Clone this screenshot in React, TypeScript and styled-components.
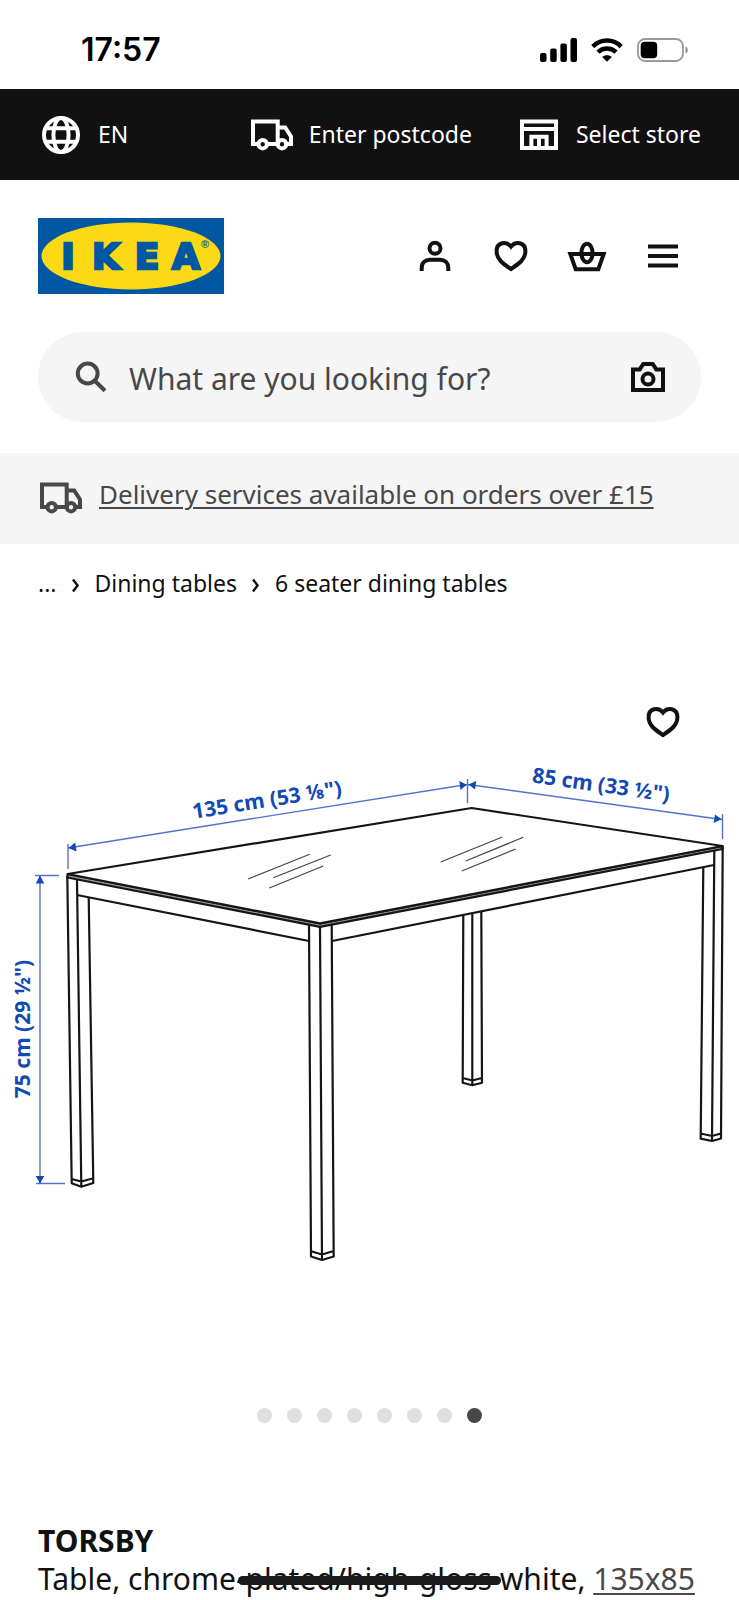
import React from "react";
import styled, { createGlobalStyle } from "styled-components";

const GlobalStyle = createGlobalStyle`
  *, *::before, *::after { box-sizing: border-box; }
  body {
    margin: 0;
    background: #fff;
    color: #111;
    font-family: "Noto Sans", "Open Sans", sans-serif;
  }
  button { padding: 0; border: 0; background: none; color: inherit; font: inherit; cursor: pointer; }
  a { color: inherit; }
  svg { display: block; flex: none; }
`;

const GUTTER = "38px";

const StatusBar = styled.div`
  display: flex;
  align-items: center;
  justify-content: space-between;
  height: 89px;
  padding: 10px 50px 0 81px;
  color: #000;
`;

const Clock = styled.time`
  font: 600 32px/40px Inter, "Liberation Sans", sans-serif;
`;

const StatusIcons = styled.div`
  display: flex;
  align-items: center;
  gap: 14px;
`;

const UtilityBar = styled.nav`
  display: flex;
  align-items: center;
  gap: 44px;
  height: 91px;
  padding: 0 ${GUTTER};
  background: #111;
  color: #fff;
`;

const UtilityButton = styled.button<{ $grow?: boolean }>`
  display: flex;
  align-items: center;
  gap: 14px;
  margin-right: ${(p) => (p.$grow ? "auto" : "0")};
  font-size: 23px;
  line-height: 32px;
  white-space: nowrap;
`;

const UtilityLabel = styled.span`
  padding-bottom: 2px;
`;

const Header = styled.header`
  display: flex;
  flex-direction: column;
  gap: 38px;
  padding: 38px ${GUTTER} 31px;
`;

const HeaderRow = styled.div`
  display: flex;
  align-items: center;
  justify-content: space-between;
`;

const Actions = styled.div`
  display: flex;
`;

const IconButton = styled.button`
  display: grid;
  place-items: center;
  width: 76px;
  height: 76px;
  flex: none;
`;

const SearchBox = styled.form`
  display: flex;
  align-items: center;
  height: 90px;
  padding: 0 15px 0 30px;
  border-radius: 45px;
  background: #f5f5f5;
  color: #484848;
`;

const SearchInput = styled.input`
  flex: 1;
  min-width: 0;
  margin-left: 15px;
  padding: 3px 0 0;
  border: 0;
  outline: 0;
  background: none;
  color: #111;
  font: 400 30px/40px "Noto Sans", "Open Sans", sans-serif;
  &::placeholder { color: #484848; opacity: 1; }
`;

const CameraButton = styled(IconButton)`
  color: #111;
`;

const DeliveryBanner = styled.aside`
  display: flex;
  align-items: flex-start;
  gap: 15px;
  padding: 22px ${GUTTER} 23px;
  background: #f5f5f5;
  color: #484848;
`;

const DeliveryLink = styled.a`
  font-size: 26px;
  line-height: 38px;
  text-decoration-thickness: 2px;
  text-underline-offset: 3px;
`;

const Crumbs = styled.ol`
  display: flex;
  align-items: center;
  gap: 14px;
  margin: 0;
  padding: 22px ${GUTTER};
  list-style: none;
  font-size: 23px;
  line-height: 34px;
`;

const Crumb = styled.li`
  display: flex;
  align-items: center;
  gap: 14px;
  a { text-decoration: none; }
`;

const Gallery = styled.section`
  position: relative;
  padding-top: 18px;
`;

const SaveButton = styled(IconButton)`
  position: absolute;
  top: 62px;
  right: ${GUTTER};
`;

const Drawing = styled.svg`
  width: 100%;
  height: auto;
`;

const Dots = styled.div`
  display: flex;
  justify-content: center;
  gap: 15px;
  padding: 28px 0 99px;
`;

const Dot = styled.button<{ $active: boolean }>`
  width: 15px;
  height: 15px;
  border-radius: 50%;
  background: ${(p) => (p.$active ? "#484848" : "#dfdfdf")};
`;

const Product = styled.section`
  padding: 0 ${GUTTER} 2px;
  font-size: 30px;
  line-height: 38px;
`;

const ProductName = styled.h1`
  margin: 0;
  font-size: 30px;
  line-height: 38px;
  font-weight: 700;
`;

const Description = styled.p`
  margin: 0;
  white-space: nowrap;
`;

const Redacted = styled.span`
  position: relative;
  &::after {
    content: "";
    position: absolute;
    left: 2px;
    right: -9px;
    top: 18px;
    height: 9px;
    border-radius: 5px;
    background: #1b1b1b;
  }
`;

const SizeLink = styled.a`
  color: #484848;
  text-decoration-thickness: 2px;
  text-underline-offset: 3px;
`;

type IconProps = { children: React.ReactNode };

const Icon = ({ children }: IconProps) => (
  <svg width="46" height="46" viewBox="0 0 46 46" fill="none" stroke="currentColor" strokeWidth="4" aria-hidden="true">
    {children}
  </svg>
);

const GlobeIcon = () => (
  <Icon>
    <circle cx="23" cy="23" r="17" />
    <ellipse cx="23" cy="23" rx="7.6" ry="17" />
    <path d="M7 16.3H39M7 29.7H39" />
  </Icon>
);

const TruckIcon = () => (
  <Icon>
    <path d="M9.5 32H4V9.4H28.7V32M18 32H29M28.7 15.4H36.2L42 24.5V32H37.5" />
    <circle cx="13.7" cy="32.2" r="4.2" />
    <circle cx="33" cy="32.2" r="4.2" />
  </Icon>
);

const StoreIcon = () => (
  <Icon>
    <path d="M6 9.4H40V36H6ZM6 17H40M15.4 36V24.7H30.6V36M23 25V36" />
  </Icon>
);

const PersonIcon = () => (
  <Icon>
    <circle cx="23" cy="15.3" r="5.5" />
    <path d="M9.7 38V35C9.7 30 13 26.8 18 26.8H28C33 26.8 36.3 30 36.3 35V38" />
  </Icon>
);

const HeartIcon = () => (
  <Icon>
    <path d="M23 13.5C18.5 7.8 8.6 9 8.6 18.3C8.6 26.5 15.5 31 23 36C30.5 31 37.4 26.5 37.4 18.3C37.4 9 27.5 7.8 23 13.5Z" />
  </Icon>
);

const BasketIcon = () => (
  <Icon>
    <path d="M6.3 21H39.7L34.3 36.2H11.7Z" />
    <ellipse cx="23" cy="20" rx="5.6" ry="9.2" />
  </Icon>
);

const MenuIcon = () => (
  <Icon>
    <path d="M8 13.5H38M8 23H38M8 32.5H38" />
  </Icon>
);

const SearchIcon = () => (
  <Icon>
    <circle cx="19.7" cy="19.5" r="9.9" />
    <path d="M26.5 26.5L37 36.7" />
  </Icon>
);

const CameraIcon = () => (
  <Icon>
    <path d="M8 15.4H14.7L18.3 9.9H27.7L31.3 15.4H38V36H8Z" />
    <circle cx="23" cy="25" r="5.5" />
  </Icon>
);

const ChevronIcon = () => (
  <svg width="10" height="20" viewBox="0 0 10 20" fill="none" stroke="currentColor" strokeWidth="2.4" aria-hidden="true">
    <path d="M2 6.4L6.6 12.4L2 18.4" />
  </svg>
);

const SignalIcon = () => (
  <svg width="37" height="24" viewBox="0 0 37 24" aria-hidden="true">
    <rect x="0" y="15" width="6.5" height="9" rx="2" />
    <rect x="10.2" y="10.5" width="6.5" height="13.5" rx="2" />
    <rect x="20.4" y="5.5" width="6.5" height="18.5" rx="2" />
    <rect x="30.5" y="0" width="6.5" height="24" rx="2" />
  </svg>
);

const WifiIcon = () => (
  <svg width="32" height="24" viewBox="0 0 32 24" fill="none" stroke="#000" strokeWidth="4.5" aria-hidden="true">
    <path d="M1.8 8.6C9.6 .6 22.4 .6 30.2 8.6" />
    <path d="M7 14.2C12 9.3 20 9.3 25 14.2" />
    <path d="M11.2 19C13.8 16.7 18.2 16.7 20.8 19L16 23.8Z" fill="#000" stroke="none" />
  </svg>
);

const BatteryIcon = () => (
  <svg width="52" height="24" viewBox="0 0 52 24" aria-hidden="true">
    <rect x="1" y="1" width="45" height="22" rx="7" fill="none" stroke="#999" strokeWidth="1.8" />
    <rect x="3.7" y="3.7" width="16.5" height="16.6" rx="4" />
    <path d="M48.5 8.5C51.5 9.5 51.5 14.5 48.5 15.5Z" fill="#8c8c8c" />
  </svg>
);

const Logo = () => (
  <svg width="186" height="76" viewBox="0 0 186 76" role="img" aria-label="IKEA">
    <rect width="186" height="76" fill="#0058a3" />
    <ellipse cx="93" cy="38" rx="89.5" ry="33.5" fill="#fbd914" />
    <text
      x="30 68 109 148"
      y="51"
      textAnchor="middle"
      fill="#0058a3"
      stroke="#0058a3"
      strokeWidth="2.6"
      fontFamily="DejaVu Sans, sans-serif"
      fontWeight="700"
      fontSize="36"
    >
      IKEA
    </text>
    <text x="163" y="30" fill="#0058a3" fontFamily="Liberation Sans, sans-serif" fontWeight="700" fontSize="11">®</text>
  </svg>
);

const TableDrawing = () => (
  <Drawing viewBox="0 640 739 740" role="img" aria-label="TORSBY table measurements">
    <g fill="none" stroke="#151515" strokeWidth="2.2" strokeLinejoin="round">
      <path d="M67.7 874L320 923.3L722.5 846V849L320 926.8L67.3 877.5Z" fill="#999" />
      <path d="M67.7 874L471.7 808L722.5 846L320 923.3Z" fill="#fff" />
      <path d="M77 895L309 941M332 941L714 865" />
      <path d="M67.3 876L71.7 1183.3L81.3 1186.7L93.3 1183L88.7 897M77 880L81.3 1186M71.7 1179L81.3 1181.5L93.3 1178.3" />
      <path d="M309 925L311 1256.5L322 1260L333.7 1256.5L331.7 925M320 926L322 1260M311 1251.3L322 1254.5L333.7 1251" />
      <path d="M463.3 915L462.7 1082.7L472.3 1085.3L482 1082.7L481.3 911M472.3 913V1085M462.7 1078L472.3 1080.5L482 1078" />
      <path d="M703.3 867L700.7 1138.7L712 1141L721 1138.5L722.7 847M714.3 851L712 1141M700.7 1133.5L712 1136L721 1133.5" />
    </g>
    <path
      d="M248 879L309.7 854.3M273.3 877.7L330.7 855M269.3 888L323.3 866M440.7 862L502.3 837M465.7 861L523.3 837.3M461.7 871L515.7 849"
      fill="none"
      stroke="#444"
      strokeWidth="1.2"
    />
    <path
      d="M68 844V869M467.5 779V803M722.5 814V839M68 848L467 784.5M468 784.5L722 819.5M35 875.5H59M36 1183.5H65M40 876V1183"
      fill="none"
      stroke="#5570cf"
      strokeWidth="1.4"
    />
    <g fill="#1149b5">
      <path d="M68.5 848L75.3 842.5L76.5 851.5Z" />
      <path d="M466.7 784.7L459.3 781L460.5 790Z" />
      <path d="M468.5 784.5L476.3 781L475 789.5Z" />
      <path d="M721.5 819.3L715 814.5L713.7 823Z" />
      <path d="M40 875.5L35.7 883.5H44.3Z" />
      <path d="M40 1183.5L35.7 1176H44.3Z" />
    </g>
    <g
      fill="#1149b5"
      fontFamily="Noto Sans, Open Sans, sans-serif"
      fontWeight="700"
      fontSize="21"
      textAnchor="middle"
    >
      <text transform="translate(268 807) rotate(-9)">135 cm (53 ⅛")</text>
      <text transform="translate(600 792) rotate(8)">85 cm (33 ½")</text>
      <text transform="translate(30 1029) rotate(-90)">75 cm (29 ½")</text>
    </g>
  </Drawing>
);

const SLIDES = 8;

export default function App() {
  const [slide, setSlide] = React.useState(SLIDES - 1);
  return (
    <>
      <GlobalStyle />
      <StatusBar>
        <Clock>17:57</Clock>
        <StatusIcons>
          <SignalIcon />
          <WifiIcon />
          <BatteryIcon />
        </StatusIcons>
      </StatusBar>
      <UtilityBar>
        <UtilityButton $grow>
          <GlobeIcon />
          <UtilityLabel>EN</UtilityLabel>
        </UtilityButton>
        <UtilityButton>
          <TruckIcon />
          <UtilityLabel>Enter postcode</UtilityLabel>
        </UtilityButton>
        <UtilityButton>
          <StoreIcon />
          <UtilityLabel>Select store</UtilityLabel>
        </UtilityButton>
      </UtilityBar>
      <Header>
        <HeaderRow>
          <a href="#home">
            <Logo />
          </a>
          <Actions>
            <IconButton aria-label="Profile"><PersonIcon /></IconButton>
            <IconButton aria-label="Favourites"><HeartIcon /></IconButton>
            <IconButton aria-label="Shopping bag"><BasketIcon /></IconButton>
            <IconButton aria-label="Menu"><MenuIcon /></IconButton>
          </Actions>
        </HeaderRow>
        <SearchBox role="search" onSubmit={(e) => e.preventDefault()}>
          <SearchIcon />
          <SearchInput type="text" aria-label="Search" placeholder="What are you looking for?" />
          <CameraButton type="button" aria-label="Search by image"><CameraIcon /></CameraButton>
        </SearchBox>
      </Header>
      <DeliveryBanner>
        <TruckIcon />
        <DeliveryLink href="#delivery">Delivery services available on orders over £15</DeliveryLink>
      </DeliveryBanner>
      <main>
        <nav aria-label="Breadcrumb">
          <Crumbs>
            <Crumb><a href="#all">...</a></Crumb>
            <Crumb><ChevronIcon /><a href="#dining">Dining tables</a></Crumb>
            <Crumb><ChevronIcon /><a href="#six-seater">6 seater dining tables</a></Crumb>
          </Crumbs>
        </nav>
        <Gallery>
          <TableDrawing />
          <SaveButton aria-label="Save to favourites"><HeartIcon /></SaveButton>
          <Dots>
            {Array.from({ length: SLIDES }, (_, i) => (
              <Dot key={i} $active={i === slide} aria-label={`Image ${i + 1}`} onClick={() => setSlide(i)} />
            ))}
          </Dots>
        </Gallery>
        <Product>
          <ProductName>TORSBY</ProductName>
          <Description>
            Table, chrome<Redacted>-plated/high-gloss</Redacted> white, <SizeLink href="#size">135x85</SizeLink>
          </Description>
        </Product>
      </main>
    </>
  );
}
